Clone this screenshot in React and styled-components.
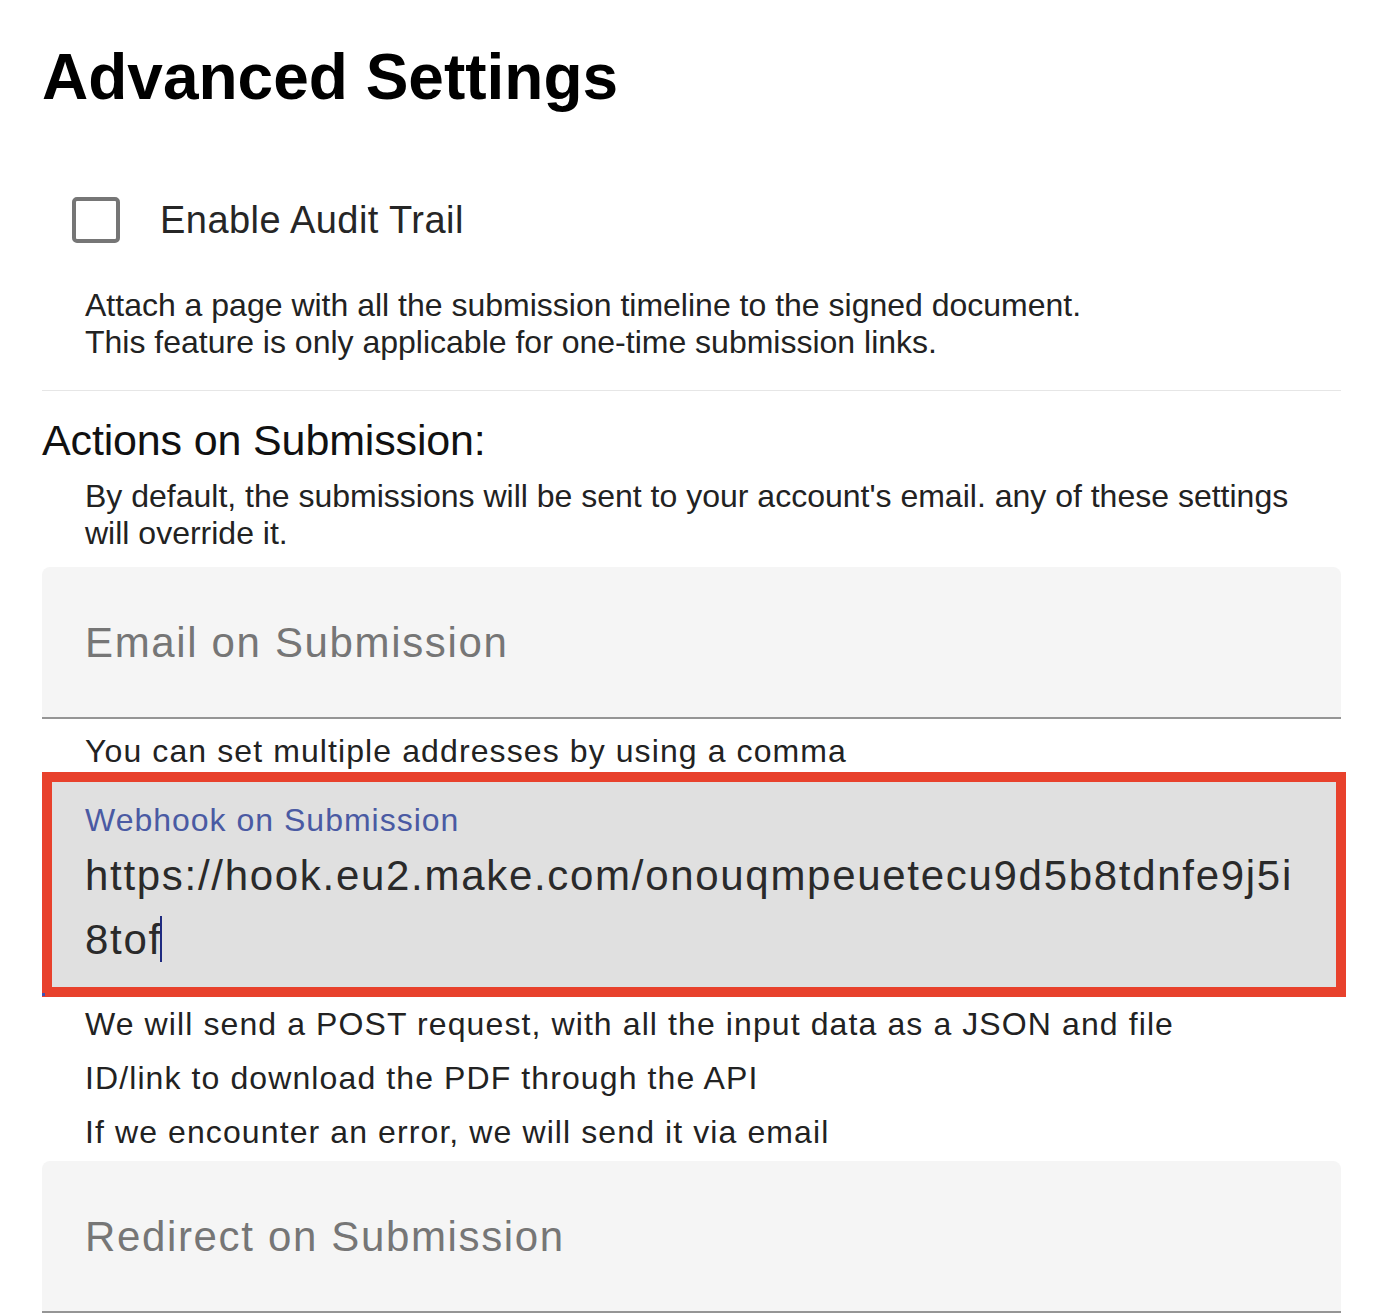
import styled, { createGlobalStyle } from "styled-components";

const GlobalStyle = createGlobalStyle`
  body {
    margin: 0;
    background: #ffffff;
    font-family: "Liberation Sans", Arial, sans-serif;
    color: #212121;
  }
`;

const Page = styled.div`
  width: 1299px;
  padding: 45px 0 0 42px;
  display: flex;
  flex-direction: column;
`;

const Title = styled.h1`
  margin: 0;
  font-size: 64px;
  line-height: 64px;
  font-weight: 700;
  color: #000;
`;

const CheckRow = styled.label`
  display: flex;
  align-items: center;
  gap: 40px;
  margin: 88px 0 0 30px;
  height: 46px;
`;

const Box = styled.span`
  width: 40px;
  height: 38px;
  border: 4px solid #767676;
  border-radius: 5px;
  box-sizing: content-box;
`;

const CheckLabel = styled.span`
  font-size: 38px;
  line-height: 46px;
  color: #262626;
  letter-spacing: 0.45px;
`;

const Note = styled.p`
  margin: ${(p) => p.$mt || 0}px 0 0 43px;
  font-size: 32px;
  line-height: 37px;
  color: #222;
`;

const Divider = styled.hr`
  margin: 29px 0 0;
  border: none;
  border-top: 1px solid #e6e6e6;
`;

const Heading = styled.h2`
  margin: 24px 0 0;
  font-size: 43px;
  line-height: 50px;
  font-weight: 400;
  color: #111;
  letter-spacing: -0.15px;
`;

const Field = styled.div`
  margin-top: ${(p) => p.$mt || 0}px;
  height: 150px;
  background: #f5f5f5;
  border-radius: 8px 8px 0 0;
  border-bottom: 2px solid #959595;
  display: flex;
  align-items: center;
  padding-left: 43px;
`;

const Placeholder = styled.span`
  font-size: 42px;
  color: #767676;
  letter-spacing: 1.65px;
  margin-top: 2px;
`;

const Helper = styled.div`
  margin: ${(p) => p.$mt || 0}px 0 0 43px;
  font-size: 32px;
  line-height: ${(p) => p.$lh || 54}px;
  color: #222;
  letter-spacing: 1.1px;
`;

const Highlight = styled.div`
  position: relative;
  margin: 1px -5px 0 0;
  height: 225px;
  border: 10px solid #e8412c;
  background: #e0e0e0;
  padding: 18px 0 0 33px;
  box-sizing: border-box;
  display: flex;
  flex-direction: column;
  gap: 4px;

  &::before {
    content: "";
    position: absolute;
    left: -10px;
    bottom: -9px;
    width: 3px;
    height: 3px;
    background: #3f51b5;
  }
`;

const FloatLabel = styled.span`
  font-size: 32px;
  line-height: 40px;
  color: #4a5aa3;
  letter-spacing: 1px;
`;

const Value = styled.div`
  font-size: 42px;
  line-height: 64px;
  color: #2a2a2a;
  letter-spacing: 1.7px;
`;

const Caret = styled.span`
  display: inline-block;
  width: 2px;
  height: 46px;
  background: #1f2a80;
  vertical-align: -8px;
  margin-left: -2px;
`;

export default function App() {
  return (
    <>
      <GlobalStyle />
      <Page>
        <Title>Advanced Settings</Title>
        <CheckRow>
          <Box />
          <CheckLabel>Enable Audit Trail</CheckLabel>
        </CheckRow>
        <Note $mt={44}>
          Attach a page with all the submission timeline to the signed document.
          <br />
          This feature is only applicable for one-time submission links.
        </Note>
        <Divider />
        <Heading>Actions on Submission:</Heading>
        <Note $mt={13}>
          By default, the submissions will be sent to your account's email. any of these settings
          <br />
          will override it.
        </Note>
        <Field $mt={15}>
          <Placeholder>Email on Submission</Placeholder>
        </Field>
        <Helper $mt={12} $lh={40}>
          You can set multiple addresses by using a comma
        </Helper>
        <Highlight>
          <FloatLabel>Webhook on Submission</FloatLabel>
          <Value>
            https://hook.eu2.make.com/onouqmpeuetecu9d5b8tdnfe9j5i
            <br />
            8tof
            <Caret />
          </Value>
        </Highlight>
        <Helper>
          We will send a POST request, with all the input data as a JSON and file
          <br />
          ID/link to download the PDF through the API
          <br />
          If we encounter an error, we will send it via email
        </Helper>
        <Field $mt={2}>
          <Placeholder>Redirect on Submission</Placeholder>
        </Field>
      </Page>
    </>
  );
}
